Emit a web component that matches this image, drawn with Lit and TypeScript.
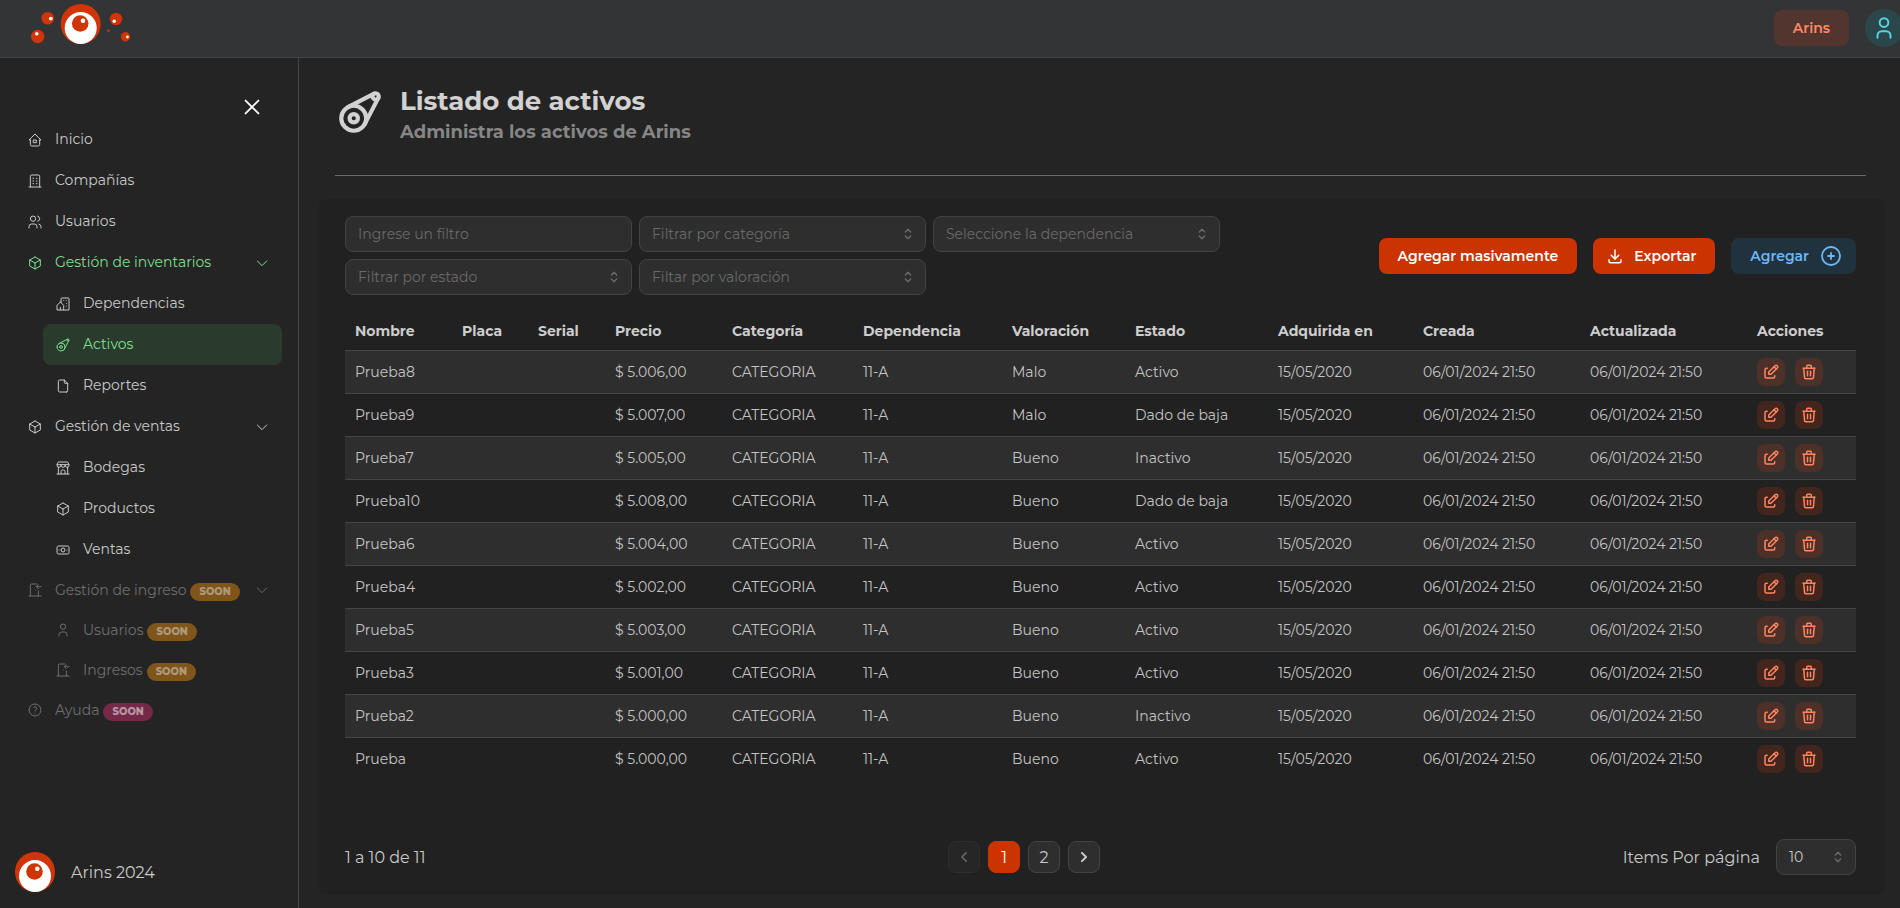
import { LitElement, html, css, svg, nothing } from "lit";
import { customElement, property } from "lit/decorators.js";
import { classMap } from "lit/directives/class-map.js";

const ICONS: Record<string, string[]> = {
  home: ["M5 12H3l9-9 9 9h-2", "M5 12v7a2 2 0 0 0 2 2h10a2 2 0 0 0 2-2v-7", "M10 12h4v4h-4z"],
  building: [
    "M3 21h18",
    "M5 21V5a2 2 0 0 1 2-2h10a2 2 0 0 1 2 2v16",
    "M9 8h1M9 12h1M9 16h1M14 8h1M14 12h1M14 16h1",
  ],
  users: [
    "M5 7a4 4 0 1 0 8 0a4 4 0 1 0-8 0",
    "M3 21v-2a4 4 0 0 1 4-4h4a4 4 0 0 1 4 4v2",
    "M16 3.13a4 4 0 0 1 0 7.75",
    "M21 21v-2a4 4 0 0 0-3-3.85",
  ],
  box: ["M12 3l8 4.5v9L12 21l-8-4.5v-9L12 3", "M12 12l8-4.5", "M12 12v9", "M12 12L4 7.5"],
  community: [
    "M8 9l5 5v7H8v-4m0 4H3v-7l5-5m1 1V4a1 1 0 0 1 1-1h10a1 1 0 0 1 1 1v17h-8",
    "M13 7v.01M17 7v.01M17 11v.01M17 15v.01",
  ],
  belt: [
    "M3 15a6 6 0 1 0 12 0a6 6 0 1 0-12 0",
    "M7 15a2 2 0 1 0 4 0a2 2 0 1 0-4 0",
    "M18 4.5a1.5 1.5 0 1 0 3 0a1.5 1.5 0 1 0-3 0",
    "M6.2 9.7L18.8 3.2",
    "M20.8 5.2L14.4 17.6",
  ],
  file: [
    "M14 3v4a1 1 0 0 0 1 1h4",
    "M17 21H7a2 2 0 0 1-2-2V5a2 2 0 0 1 2-2h7l5 5v11a2 2 0 0 1-2 2z",
  ],
  store: [
    "M3 21h18",
    "M3 7v1a3 3 0 0 0 6 0V7m0 1a3 3 0 0 0 6 0V7m0 1a3 3 0 0 0 6 0V7H3l2-4h14l2 4",
    "M5 21V10.85M19 21V10.85",
    "M9 21v-4a2 2 0 0 1 2-2h2a2 2 0 0 1 2 2v4",
  ],
  cash: [
    "M9 12a3 3 0 1 0 6 0a3 3 0 1 0-6 0",
    "M3 8a2 2 0 0 1 2-2h14a2 2 0 0 1 2 2v8a2 2 0 0 1-2 2H5a2 2 0 0 1-2-2z",
    "M18 12h.01M6 12h.01",
  ],
  door: ["M13 12v.01", "M3 21h18", "M5 21V5a2 2 0 0 1 2-2h7.5M17 13.5V21", "M21 7h-7m3-3l-3 3 3 3"],
  user: ["M8 7a4 4 0 1 0 8 0a4 4 0 0 0-8 0", "M6 21v-2a4 4 0 0 1 4-4h4a4 4 0 0 1 4 4v2"],
  help: [
    "M3 12a9 9 0 1 0 18 0a9 9 0 1 0-18 0",
    "M12 17v.01",
    "M12 13.5a1.5 1.5 0 0 1 1-1.5a2.6 2.6 0 1 0-3-4",
  ],
  close: ["M5 5l14 14M19 5L5 19"],
  down: ["M5 9l7 7 7-7"],
  left: ["M14.5 7l-5 5 5 5"],
  right: ["M9.5 7l5 5-5 5"],
  selector: ["M8 9l4-4 4 4", "M16 15l-4 4-4-4"],
  download: ["M4 17v2a2 2 0 0 0 2 2h12a2 2 0 0 0 2-2v-2", "M7 11l5 5 5-5", "M12 4v12"],
  plus: ["M3 12a9 9 0 1 0 18 0a9 9 0 1 0-18 0", "M9 12h6M12 9v6"],
  edit: [
    "M7 7H6a2 2 0 0 0-2 2v9a2 2 0 0 0 2 2h9a2 2 0 0 0 2-2v-1",
    "M20.385 6.585a2.1 2.1 0 0 0-2.97-2.97L9 12v3h3l8.385-8.415z",
    "M16 5l3 3",
  ],
  trash: [
    "M4 7h16M10 11v6M14 11v6",
    "M5 7l1 12a2 2 0 0 0 2 2h8a2 2 0 0 0 2-2l1-12",
    "M9 7V4a1 1 0 0 1 1-1h4a1 1 0 0 1 1 1v3",
  ],
};

const icon = (name: string, size = 16, stroke = 1.5) => html`<svg
  width=${size}
  height=${size}
  viewBox="0 0 24 24"
  fill="none"
  stroke="currentColor"
  stroke-width=${stroke}
  stroke-linecap="round"
  stroke-linejoin="round"
  aria-hidden="true"
>${ICONS[name].map((d) => svg`<path d=${d}></path>`)}</svg>`;

const shared = css`
  * {
    box-sizing: border-box;
  }
  svg {
    display: block;
    flex: none;
  }
  button,
  input,
  select {
    font: inherit;
    color: inherit;
    margin: 0;
  }
  button {
    border: 0;
    padding: 0;
    background: none;
    cursor: pointer;
  }
  a {
    color: inherit;
    text-decoration: none;
  }
`;

const eye = svg`
  <circle cx="20" cy="20" r="20" fill="#cf3506"></circle>
  <circle cx="20" cy="24" r="16" fill="#fff"></circle>
  <circle cx="19.5" cy="19.5" r="8.3" fill="#cf3506"></circle>
  <circle cx="22.3" cy="16.8" r="2.3" fill="#fff"></circle>`;

interface NavItem {
  label: string;
  icon: string;
  child?: boolean;
  group?: boolean;
  state?: "active" | "open";
  badge?: "orange" | "pink";
}

const NAV: NavItem[] = [
  { label: "Inicio", icon: "home" },
  { label: "Compañías", icon: "building" },
  { label: "Usuarios", icon: "users" },
  { label: "Gestión de inventarios", icon: "box", group: true, state: "open" },
  { label: "Dependencias", icon: "community", child: true },
  { label: "Activos", icon: "belt", child: true, state: "active" },
  { label: "Reportes", icon: "file", child: true },
  { label: "Gestión de ventas", icon: "box", group: true },
  { label: "Bodegas", icon: "store", child: true },
  { label: "Productos", icon: "box", child: true },
  { label: "Ventas", icon: "cash", child: true },
  { label: "Gestión de ingreso", icon: "door", group: true, badge: "orange" },
  { label: "Usuarios", icon: "user", child: true, badge: "orange" },
  { label: "Ingresos", icon: "door", child: true, badge: "orange" },
  { label: "Ayuda", icon: "help", badge: "pink" },
];

@customElement("app-topbar")
export class AppTopbar extends LitElement {
  static styles = [
    shared,
    css`
      :host {
        display: block;
      }
      .bar {
        height: 58px;
        display: flex;
        align-items: center;
        gap: 16px;
        padding: 0 0 2px 30px;
        background: #333436;
        border-bottom: 1px solid #454545;
        overflow: hidden;
      }
      .logo {
        margin: 0 auto 8px 0;
      }
      .company {
        height: 36px;
        padding: 0 19px;
        border-radius: 8px;
        background: #52352e;
        color: #ff8b66;
        font-size: 14px;
        font-weight: 600;
      }
      .avatar {
        width: 38px;
        height: 38px;
        margin-right: -3px;
        border-radius: 50%;
        background: #2c474b;
        color: #55d6e4;
        display: grid;
        place-items: center;
        flex: none;
      }
    `,
  ];
  render() {
    return html`<header class="bar">
      <a class="logo" href="#" aria-label="Arins">
        <svg width="102" height="42" viewBox="30 3 102 42">
          <g transform="translate(60.7 4)">${eye}</g>
          <g fill="#cf3506">
            <circle cx="47.7" cy="18.3" r="6.3"></circle>
            <circle cx="37.7" cy="36.5" r="6.7"></circle>
            <circle cx="116" cy="19" r="6.2"></circle>
            <circle cx="125.5" cy="36.7" r="4.7"></circle>
            <circle cx="108.4" cy="30.7" r="1.3"></circle>
          </g>
          <g fill="#fff">
            <circle cx="50.8" cy="18.6" r="1.9"></circle>
            <circle cx="36.8" cy="33.7" r="1.8"></circle>
            <circle cx="114.2" cy="21.2" r="1.7"></circle>
            <circle cx="127.4" cy="37" r="1.4"></circle>
          </g>
        </svg>
      </a>
      <button class="company">Arins</button>
      <button class="avatar" aria-label="Perfil">${icon("user", 26, 1.8)}</button>
    </header>`;
  }
}

@customElement("app-sidebar")
export class AppSidebar extends LitElement {
  static styles = [
    shared,
    css`
      :host {
        display: flex;
        flex-direction: column;
        width: 299px;
        flex: none;
        padding: 38px 16px 16px 15px;
        border-right: 1px solid #454545;
        font-size: 14px;
        line-height: 21px;
      }
      .close {
        align-self: flex-end;
        margin: 0 19px 1px 0;
        color: #fff;
      }
      .nav {
        display: flex;
        flex-direction: column;
      }
      .item {
        display: flex;
        align-items: center;
        gap: 12px;
        height: 41px;
        padding: 0 12px;
        border-radius: 8px;
        color: #c9c9c9;
        text-align: left;
      }
      .text {
        display: flex;
        align-items: center;
        gap: 4px;
        flex: 1;
        white-space: nowrap;
      }
      .child {
        margin-left: 28px;
      }
      .open,
      .active {
        color: #7ddf8e;
      }
      .active {
        background: #2a3b2d;
      }
      .soon {
        height: 40px;
        color: #6e6e6e;
      }
      .badge {
        height: 18px;
        margin-top: 3px;
        padding: 0 9px;
        border-radius: 9px;
        font-size: 10px;
        font-weight: 800;
        line-height: 18px;
      }
      .orange {
        background: #80551a;
        color: #ad9a7c;
      }
      .pink {
        background: #762848;
        color: #b896a4;
      }
      .foot {
        display: flex;
        align-items: center;
        gap: 16px;
        margin-top: auto;
        font-size: 16px;
        color: #c9c9c9;
      }
    `,
  ];
  private item(n: NavItem) {
    const classes = classMap({
      item: true,
      child: !!n.child,
      open: n.state === "open",
      active: n.state === "active",
      soon: !!n.badge,
    });
    const body = html`${icon(n.icon)}<span class="text"
        >${n.label}${n.badge
          ? html`<span class="badge ${n.badge}">SOON</span>`
          : nothing}</span
      >${n.group ? icon("down") : nothing}`;
    return n.group
      ? html`<button class=${classes} aria-expanded="true">${body}</button>`
      : html`<a class=${classes} href="#">${body}</a>`;
  }
  render() {
    return html`
      <button class="close" aria-label="Cerrar menú">${icon("close", 22, 2)}</button>
      <nav class="nav">${NAV.map((n) => this.item(n))}</nav>
      <div class="foot">
        <svg width="40" height="40" viewBox="0 0 40 40">${eye}</svg>
        <span>Arins 2024</span>
      </div>
    `;
  }
}

@customElement("app-select")
export class AppSelect extends LitElement {
  @property() label = "";
  @property() value = "";
  static styles = [
    shared,
    css`
      :host {
        display: block;
      }
      .field {
        display: grid;
        align-items: center;
      }
      .select {
        grid-area: 1 / 1;
        width: 100%;
        height: 36px;
        padding: 0 32px 0 12px;
        border: 1px solid #424242;
        border-radius: 8px;
        background: #2e2e2e;
        color: #696969;
        font-size: 14px;
        appearance: none;
        text-overflow: ellipsis;
      }
      .filled {
        color: #c9c9c9;
      }
      .arrow {
        grid-area: 1 / 1;
        justify-self: end;
        margin-right: 10px;
        color: #6c6c6c;
        pointer-events: none;
      }
    `,
  ];
  render() {
    return html`<div class="field">
      <select
        class=${classMap({ select: true, filled: !!this.value })}
        aria-label=${this.label}
      >
        <option>${this.value || this.label}</option>
      </select>
      <span class="arrow">${icon("selector", 16, 2)}</span>
    </div>`;
  }
}

const COLUMNS: [string, number][] = [
  ["Nombre", 107],
  ["Placa", 76],
  ["Serial", 77],
  ["Precio", 117],
  ["Categoría", 131],
  ["Dependencia", 149],
  ["Valoración", 123],
  ["Estado", 143],
  ["Adquirida en", 145],
  ["Creada", 167],
  ["Actualizada", 167],
  ["Acciones", 109],
];
const TOTAL = COLUMNS.reduce((sum, [, w]) => sum + w, 0);

const ROWS: [string, string, string, string][] = [
  ["Prueba8", "$ 5.006,00", "Malo", "Activo"],
  ["Prueba9", "$ 5.007,00", "Malo", "Dado de baja"],
  ["Prueba7", "$ 5.005,00", "Bueno", "Inactivo"],
  ["Prueba10", "$ 5.008,00", "Bueno", "Dado de baja"],
  ["Prueba6", "$ 5.004,00", "Bueno", "Activo"],
  ["Prueba4", "$ 5.002,00", "Bueno", "Activo"],
  ["Prueba5", "$ 5.003,00", "Bueno", "Activo"],
  ["Prueba3", "$ 5.001,00", "Bueno", "Activo"],
  ["Prueba2", "$ 5.000,00", "Bueno", "Inactivo"],
  ["Prueba", "$ 5.000,00", "Bueno", "Activo"],
];

@customElement("app-assets")
export class AppAssets extends LitElement {
  static styles = [
    shared,
    css`
      :host {
        display: flex;
        flex-direction: column;
        flex: 1;
        min-width: 0;
        padding: 23px 15px 13px 20px;
      }
      .head {
        display: flex;
        align-items: center;
        gap: 15px;
        margin: 0 19px 0 16px;
        padding-bottom: 32px;
        border-bottom: 1px solid #6b6b6b;
        color: #d2d2d2;
      }
      .title {
        margin: 0;
        font-size: 26px;
        line-height: 40px;
        font-weight: 700;
      }
      .subtitle {
        margin: 0;
        font-size: 18px;
        line-height: 22px;
        font-weight: 700;
        color: #868686;
      }
      .card {
        display: flex;
        flex-direction: column;
        flex: 1;
        margin-top: 23px;
        padding: 17px 29px 20px 26px;
        border-radius: 8px;
        background: #212121;
      }
      .tools {
        display: flex;
        align-items: center;
        justify-content: space-between;
        gap: 24px;
      }
      .filters {
        display: grid;
        grid-template-columns: repeat(3, minmax(0, 287px));
        gap: 7px;
        flex: 0 1 875px;
      }
      .search {
        width: 100%;
        height: 36px;
        padding: 0 12px;
        border: 1px solid #424242;
        border-radius: 8px;
        background: #2e2e2e;
        font-size: 14px;
      }
      .search::placeholder {
        color: #696969;
        opacity: 1;
      }
      .buttons {
        display: flex;
        gap: 16px;
      }
      .button {
        display: flex;
        align-items: center;
        gap: 10px;
        height: 36px;
        padding: 0 19px;
        border-radius: 8px;
        background: #cb3301;
        color: #fff;
        font-size: 14px;
        font-weight: 600;
        white-space: nowrap;
      }
      .with-left {
        padding-left: 13px;
      }
      .light {
        background: #21323f;
        color: #6cb8f6;
        padding-right: 13px;
      }
      .table {
        width: 100%;
        margin-top: 18px;
        border-collapse: collapse;
        table-layout: fixed;
        font-size: 14px;
        line-height: 22px;
        color: #c4c4c4;
      }
      .th {
        height: 37px;
        padding: 0 10px;
        text-align: left;
        font-weight: 700;
        color: #cdcdcd;
      }
      .row {
        border-top: 1px solid #454545;
      }
      .row:nth-child(odd) {
        background: #2e2e2e;
      }
      .td {
        height: 43px;
        padding: 0 10px;
        white-space: nowrap;
      }
      .actions {
        display: flex;
        gap: 10px;
      }
      .action {
        display: grid;
        place-items: center;
        width: 28px;
        height: 28px;
        border-radius: 8px;
        background: rgba(232, 62, 10, 0.17);
        color: #ff8560;
      }
      .foot {
        display: flex;
        align-items: center;
        justify-content: space-between;
        margin-top: auto;
        font-size: 16px;
        color: #c9c9c9;
      }
      .pages {
        display: flex;
        gap: 8px;
      }
      .page {
        display: grid;
        place-items: center;
        width: 32px;
        height: 32px;
        border: 1px solid #424242;
        border-radius: 8px;
        background: #2e2e2e;
      }
      .page:disabled {
        opacity: 0.4;
      }
      .current {
        border-color: #cb3301;
        background: #cb3301;
        color: #fff;
      }
      .size {
        display: flex;
        align-items: center;
        gap: 16px;
      }
      .size-select {
        width: 80px;
      }
    `,
  ];
  render() {
    return html`
      <header class="head">
        ${icon("belt", 50, 2)}
        <div>
          <h1 class="title">Listado de activos</h1>
          <p class="subtitle">Administra los activos de Arins</p>
        </div>
      </header>
      <section class="card">
        <div class="tools">
          <div class="filters">
            <input class="search" placeholder="Ingrese un filtro" aria-label="Ingrese un filtro" />
            <app-select label="Filtrar por categoría"></app-select>
            <app-select label="Seleccione la dependencia"></app-select>
            <app-select label="Filtrar por estado"></app-select>
            <app-select label="Filtar por valoración"></app-select>
          </div>
          <div class="buttons">
            <button class="button">Agregar masivamente</button>
            <button class="button with-left">${icon("download", 18, 2)}Exportar</button>
            <button class="button light">Agregar${icon("plus", 24, 1.8)}</button>
          </div>
        </div>
        <table class="table">
          <colgroup>
            ${COLUMNS.map(([, w]) => html`<col style="width:${(w / TOTAL) * 100}%" />`)}
          </colgroup>
          <thead>
            <tr>
              ${COLUMNS.map(([name]) => html`<th class="th" scope="col">${name}</th>`)}
            </tr>
          </thead>
          <tbody>
            ${ROWS.map(
              ([name, price, value, state]) => html`<tr class="row">
                <td class="td">${name}</td>
                <td class="td"></td>
                <td class="td"></td>
                <td class="td">${price}</td>
                <td class="td">CATEGORIA</td>
                <td class="td">11-A</td>
                <td class="td">${value}</td>
                <td class="td">${state}</td>
                <td class="td">15/05/2020</td>
                <td class="td">06/01/2024 21:50</td>
                <td class="td">06/01/2024 21:50</td>
                <td class="td">
                  <div class="actions">
                    <button class="action" aria-label="Editar">${icon("edit", 18, 2)}</button>
                    <button class="action" aria-label="Eliminar">${icon("trash", 18, 2)}</button>
                  </div>
                </td>
              </tr>`
            )}
          </tbody>
        </table>
        <footer class="foot">
          <span>1 a 10 de 11</span>
          <nav class="pages" aria-label="Paginación">
            <button class="page" disabled aria-label="Anterior">${icon("left", 20, 2)}</button>
            <button class="page current">1</button>
            <button class="page">2</button>
            <button class="page" aria-label="Siguiente">${icon("right", 20, 2.4)}</button>
          </nav>
          <div class="size">
            <span>Items Por página</span>
            <app-select class="size-select" label="Items Por página" value="10"></app-select>
          </div>
        </footer>
      </section>
    `;
  }
}

@customElement("app-root")
export class AppRoot extends LitElement {
  static styles = [
    shared,
    css`
      :host {
        display: flex;
        flex-direction: column;
        min-height: 100vh;
        background: #242424;
        color: #c9c9c9;
        font-family: Montserrat, Inter, "Liberation Sans", sans-serif;
        overflow: hidden;
      }
      .body {
        display: flex;
        flex: 1;
      }
    `,
  ];
  render() {
    return html`<app-topbar></app-topbar>
      <div class="body">
        <app-sidebar></app-sidebar>
        <app-assets></app-assets>
      </div>`;
  }
}
